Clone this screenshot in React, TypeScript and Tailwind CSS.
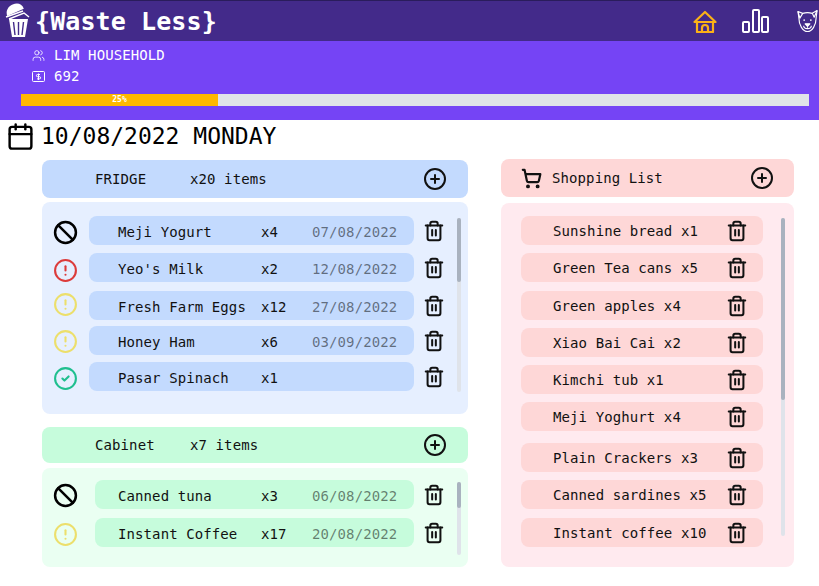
import { Ban, CircleAlert, CircleCheck, CirclePlus, ShoppingCart, Trash2, Users, Calendar } from 'lucide-react';

type Status = 'expired' | 'soon' | 'warn' | 'ok';

const fridge = [
  { name: 'Meji Yogurt', qty: 'x4', date: '07/08/2022', status: 'expired', top: 'mt-0', nudge: 'pt-[4px]' },
  { name: "Yeo's Milk", qty: 'x2', date: '12/08/2022', status: 'soon', top: 'mt-[8px]', nudge: 'pt-[5px]' },
  { name: 'Fresh Farm Eggs', qty: 'x12', date: '27/08/2022', status: 'warn', top: 'mt-[9px]', nudge: 'pb-[2px]' },
  { name: 'Honey Ham', qty: 'x6', date: '03/09/2022', status: 'warn', top: 'mt-[6px]', nudge: 'pt-[1px]' },
  { name: 'Pasar Spinach', qty: 'x1', date: '', status: 'ok', top: 'mt-[7px]', nudge: 'pt-[3px]' },
];

const cabinet = [
  { name: 'Canned tuna', qty: 'x3', date: '06/08/2022', status: 'expired', top: 'mt-0', nudge: 'pt-[1px]' },
  { name: 'Instant Coffee', qty: 'x17', date: '20/08/2022', status: 'warn', top: 'mt-[9px]', nudge: 'pt-[3px]' },
];

const shopping = [
  { label: 'Sunshine bread x1', top: 'mt-0' },
  { label: 'Green Tea cans x5', top: 'mt-[8px]' },
  { label: 'Green apples x4', top: 'mt-[9px]' },
  { label: 'Xiao Bai Cai x2', top: 'mt-[8px]' },
  { label: 'Kimchi tub x1', top: 'mt-[8px]' },
  { label: 'Meji Yoghurt x4', top: 'mt-[8px]' },
  { label: 'Plain Crackers x3', top: 'mt-[12px]' },
  { label: 'Canned sardines x5', top: 'mt-[8px]' },
  { label: 'Instant coffee x10', top: 'mt-[9px]' },
];

function Logo() {
  return (
    <svg width="26" height="36" viewBox="0 0 26 36" fill="none">
      <path d="M2 10 C2 4 7 1 11 1 C16 1 20 3 20 9 Z" fill="white" transform="rotate(-20 11 8)" />
      <path d="M2 14 L19 8" stroke="white" strokeWidth="1.5" />
      <path d="M5 16 L20 10 L25 14" stroke="white" strokeWidth="1.5" />
      <path d="M5 16 H24 L21 34 H8 Z" fill="white" />
      <path d="M9.5 19 L11 32 M14.5 19 V32 M19.5 19 L18 32" stroke="#432a8a" strokeWidth="1.4" />
    </svg>
  );
}

function DogHouse() {
  return (
    <svg width="24" height="23" viewBox="0 0 24 23" fill="none" stroke="#fbb117" strokeWidth="2.2" strokeLinejoin="round">
      <path d="M1.5 12 L12 2 L22.5 12 Z" />
      <path d="M4 12 V22 H20 V12" />
      <path d="M9 22 V18 a3 3 0 0 1 6 0 V22" />
    </svg>
  );
}

function Bars() {
  return (
    <svg width="27" height="24" viewBox="0 0 27 24" fill="none" stroke="white" strokeWidth="2">
      <rect x="1" y="13" width="6" height="10" rx="1" />
      <rect x="11" y="1" width="6" height="22" rx="1" />
      <rect x="20" y="8" width="6" height="15" rx="1" />
    </svg>
  );
}

function Dog() {
  return (
    <svg width="21" height="24" viewBox="0 0 22 24" fill="none" stroke="white" strokeWidth="1.2" strokeLinejoin="round">
      <path d="M1 2 L6 4 C9 3 13 3 16 4 L21 1 L20 9 C20 16 16 23 11 23 C6 23 2 16 2 9 Z" />
      <path d="M1 2 L3 9 L6 4 M21 1 L18 8 L16 4" />
      <path d="M8.5 15 H13.5 L11 17.5 Z" fill="white" />
      <path d="M11 17.5 V19 M7 17 C7 21 15 21 15 17" />
      <circle cx="7.5" cy="11" r="0.9" fill="white" stroke="none" />
      <circle cx="14.5" cy="11" r="0.9" fill="white" stroke="none" />
    </svg>
  );
}

function Dollar() {
  return (
    <svg width="13" height="13" viewBox="0 0 13 13" fill="none" stroke="white" strokeWidth="1">
      <rect x="0.5" y="1.5" width="12" height="10" rx="1" />
      <path d="M8 4.5 H5.5 a1 1 0 0 0 0 2.2 H7.5 a1 1 0 0 1 0 2.2 H5 M6.5 3.5 V10" />
    </svg>
  );
}

function StatusIcon({ status }: { status: string }) {
  const s = status as Status;
  if (s === 'expired') return <Ban size={25} strokeWidth={2.4} className="text-black" />;
  if (s === 'soon') return <CircleAlert size={25} strokeWidth={2} className="text-[#dc3b3b]" />;
  if (s === 'warn') return <CircleAlert size={25} strokeWidth={2} className="text-[#ecdf6c]" />;
  return <CircleCheck size={25} strokeWidth={2} className="text-[#1fbf8f]" />;
}

function ScrollBar({ track, thumb }: { track: string; thumb: string }) {
  return (
    <div className={`w-[4px] bg-[#dfe3ea] rounded-sm shrink-0 ${track}`}>
      <div className={`w-full bg-[#a9b2bf] rounded-sm ${thumb}`} />
    </div>
  );
}

function SectionHead({ title, count, bg }: { title: string; count: string; bg: string }) {
  return (
    <div className={`flex items-center h-full rounded-lg pl-[53px] pr-[21px] ${bg}`}>
      <span className="w-[95px]">{title}</span>
      <span>{count}</span>
      <CirclePlus size={24} strokeWidth={2} className="ml-auto" />
    </div>
  );
}

function Row({ item, bubble }: { item: (typeof fridge)[number]; bubble: string }) {
  return (
    <div className={`flex items-center h-[29px] ${item.top}`}>
      <div className={`w-[47px] flex justify-center shrink-0 ${item.nudge}`}><StatusIcon status={item.status} /></div>
      <div className={`flex items-center h-full rounded-lg ml-auto pt-[3px] ${bubble}`}>
        <span className="w-[143px]">{item.name}</span>
        <span className="w-[51px]">{item.qty}</span>
        <span className="text-black/50">{item.date}</span>
      </div>
      <div className="w-[40px] flex justify-center shrink-0">
        <Trash2 size={22} strokeWidth={2.2} />
      </div>
    </div>
  );
}

export default function App() {
  return (
    <div className="w-[819px] h-[586px] overflow-hidden bg-white text-[#111] text-[14px] tracking-[0.1px] font-['DejaVu_Sans_Mono',monospace]">
      <header className="h-[41px] bg-[#432a8a] border-t border-[#2a1c5c] flex items-center pl-[4px] pr-[1px]">
        <Logo />
        <h1 className="ml-[5px] mt-[1px] text-white text-[25px] font-bold">{'{Waste Less}'}</h1>
        <nav className="ml-auto flex items-center">
          <DogHouse />
          <div className="ml-[25px]"><Bars /></div>
          <div className="ml-[28px]"><Dog /></div>
        </nav>
      </header>

      <section className="h-[79px] bg-[#7544f5] text-white px-[10px] pt-[5px]">
        <div className="flex items-center h-[18px] pl-[22px] gap-[9px]">
          <Users size={13} strokeWidth={1.5} />
          <span>LIM HOUSEHOLD</span>
        </div>
        <div className="flex items-center h-[18px] mt-[3px] pl-[22px] gap-[9px]">
          <Dollar />
          <span>692</span>
        </div>
        <div className="ml-[11px] mt-[9px] h-[12px] bg-[#e0e3e8] flex">
          <div className="w-1/4 bg-[#ffb800] flex items-center justify-center text-[8px] font-bold leading-none">25%</div>
        </div>
      </section>

      <div className="flex items-center h-[33px] pl-[6px] text-[23px] tracking-normal text-black">
        <Calendar size={29} strokeWidth={2} />
        <span className="ml-[6px]">10/08/2022 MONDAY</span>
      </div>

      <main className="flex pl-[42px] pt-[7px]">
        <div className="w-[426px]">
          <div className="h-[38px]"><SectionHead title="FRIDGE" count="x20 items" bg="bg-[#c3dafe]" /></div>
          <div className="mt-[4px] h-[212px] rounded-lg bg-[#e6efff] flex pt-[14px]">
            <div className="w-[412px]">
              {fridge.map((f) => <Row key={f.name} item={f} bubble="w-[325px] pl-[29px] bg-[#c3dafe]" />)}
            </div>
            <div className="ml-[3px]"><ScrollBar track="h-[174px] mt-[2px]" thumb="h-[64px]" /></div>
          </div>

          <div className="mt-[13px] h-[36px]"><SectionHead title="Cabinet" count="x7 items" bg="bg-[#c6fcdc]" /></div>
          <div className="mt-[5px] h-[99px] rounded-lg bg-[#eafff2] flex pt-[12px]">
            <div className="w-[412px]">
              {cabinet.map((f) => <Row key={f.name} item={f} bubble="w-[319px] pl-[23px] bg-[#c6fcdc]" />)}
            </div>
            <div className="ml-[3px]"><ScrollBar track="h-[73px] mt-[2px]" thumb="h-[26px]" /></div>
          </div>
        </div>

        <div className="w-[293px] ml-[33px] -mt-[1px]">
          <div className="h-[38px] rounded-lg bg-[#fed7d7] flex items-center pl-[20px] pr-[20px]">
            <ShoppingCart size={21} strokeWidth={2.5} />
            <span className="ml-[10px]">Shopping List</span>
            <CirclePlus size={24} strokeWidth={2} className="ml-auto" />
          </div>
          <div className="mt-[6px] h-[364px] rounded-lg bg-[#ffeaef] flex pt-[13px]">
            <div className="ml-[20px] w-[242px]">
              {shopping.map((s) => (
                <div key={s.label} className={`flex items-center justify-between h-[29px] rounded-lg bg-[#fed7d7] pl-[32px] pr-[15px] ${s.top}`}>
                  <span className="pt-[1px]">{s.label}</span>
                  <Trash2 size={22} strokeWidth={2.2} />
                </div>
              ))}
            </div>
            <div className="ml-[18px]">
              <ScrollBar track="h-[318px] mt-[2px]" thumb="h-[182px]" />
            </div>
          </div>
        </div>
      </main>
    </div>
  );
}
